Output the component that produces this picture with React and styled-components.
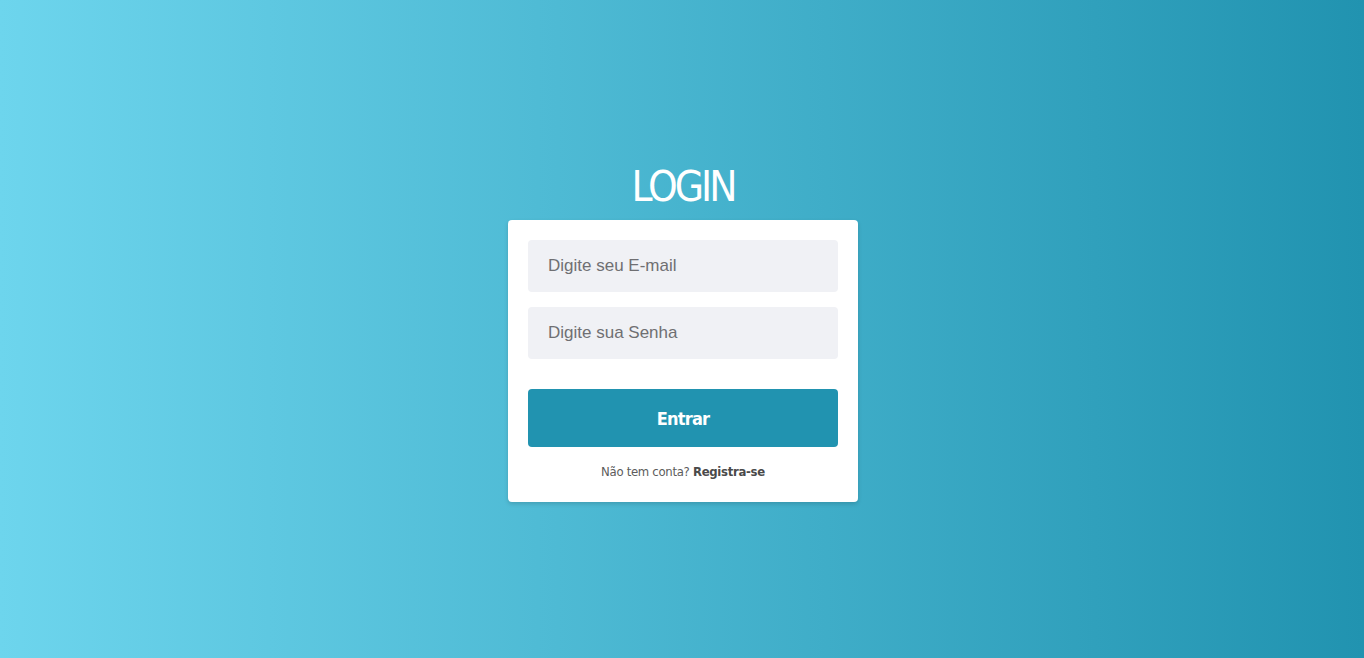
import styled, { createGlobalStyle } from 'styled-components';

const GlobalStyle = createGlobalStyle`
  * {
    box-sizing: border-box;
    margin: 0;
    padding: 0;
  }
  body {
    font-family: 'Liberation Sans', Arial, sans-serif;
  }
`;

function App() {
  return (
    <>
      <GlobalStyle />
      <Page>
        <Title>LOGIN</Title>
        <Card>
          <Input type="email" placeholder="Digite seu E-mail" />
          <Input type="password" placeholder="Digite sua Senha" />
          <Button>Entrar</Button>
          <Footer>
            Não tem conta? <strong>Registra-se</strong>
          </Footer>
        </Card>
      </Page>
    </>
  );
}

export default App;

const condensed = `'Liberation Sans Narrow', 'DejaVu Sans Condensed', 'Roboto', sans-serif`;

const Page = styled.div`
  min-height: 100vh;
  display: flex;
  flex-direction: column;
  align-items: center;
  justify-content: center;
  padding-top: 3px;
  padding-left: 2px;
  background: linear-gradient(to right, #6dd5ed, #2193b0);
`;

const Title = styled.h1`
  font-family: ${condensed};
  font-weight: 400;
  font-size: 42px;
  line-height: 48px;
  letter-spacing: -3px;
  color: #fff;
  margin-bottom: 9px;
  padding-top: 4px;
`;

const Card = styled.div`
  width: 350px;
  padding: 20px;
  display: flex;
  flex-direction: column;
  background: #fff;
  border-radius: 4px;
  box-shadow: 0 2px 4px rgba(0, 0, 0, 0.15);
`;

const Input = styled.input`
  width: 100%;
  height: 52px;
  padding: 0 20px;
  border: none;
  border-radius: 4px;
  background: #f0f1f5;
  font-family: 'Liberation Sans', Arial, sans-serif;
  font-size: 17px;
  color: #444;
  outline: none;
  & + & {
    margin-top: 15px;
  }
  &::placeholder {
    color: #6f6f72;
  }
`;

const Button = styled.button`
  margin-top: 30px;
  height: 58px;
  border: none;
  border-radius: 4px;
  background: #2193b0;
  color: #fff;
  font-family: ${condensed};
  font-weight: 700;
  font-size: 18px;
  letter-spacing: -0.8px;
  cursor: pointer;
`;

const Footer = styled.p`
  margin-top: 15px;
  text-align: center;
  font-family: ${condensed};
  font-size: 13px;
  line-height: 20px;
  letter-spacing: -0.3px;
  color: #5c5c5c;
  strong {
    font-weight: 700;
    color: #4a4a4a;
  }
`;
